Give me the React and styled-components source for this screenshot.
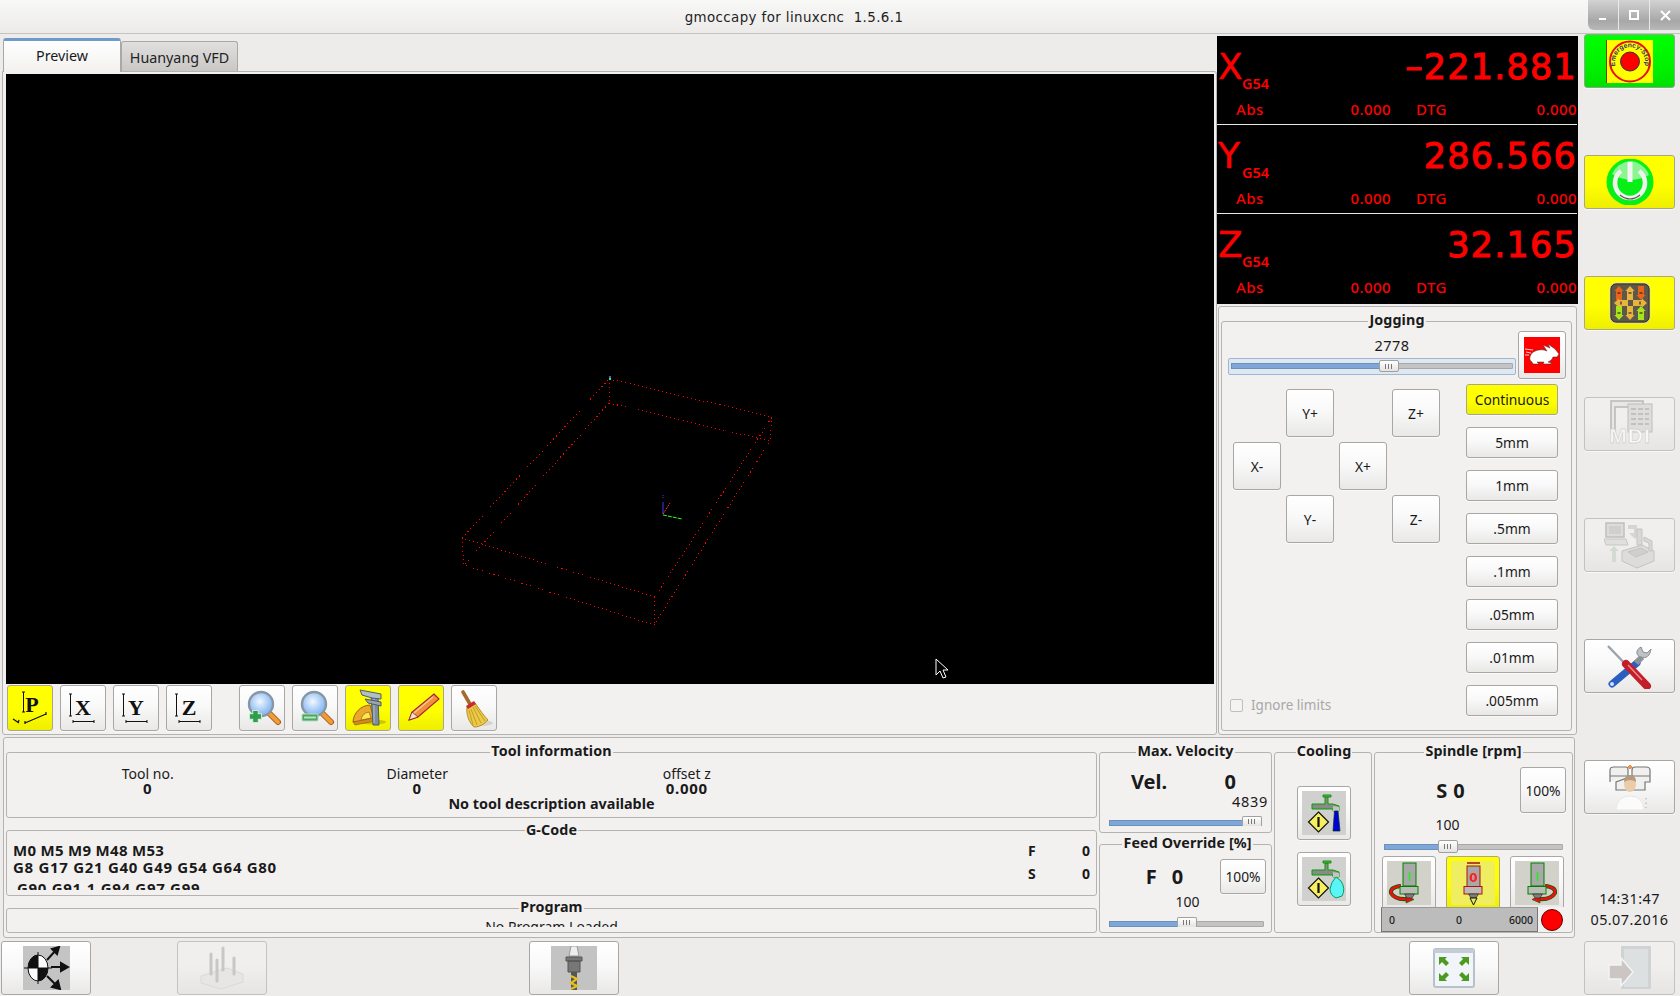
import React from "react";
import styled, { createGlobalStyle, css } from "styled-components";

const Global = createGlobalStyle`
  html, body { margin: 0; padding: 0; background: #edeceb; }
  body { font-family: "Noto Sans", "DejaVu Sans", sans-serif; font-size: 14px; color: #1a1a1a; overflow: hidden; }
  * { box-sizing: border-box; }
`;

const Page = styled.div`
  width: 1680px;
  height: 996px;
  display: flex;
  flex-direction: column;
  overflow: hidden;
`;

const TitleBar = styled.div`
  height: 34px;
  display: flex;
  background: linear-gradient(#f8f8f7, #ecebea);
  border-bottom: 1px solid #c4c3c1;
`;
const Title = styled.div`
  flex: 1;
  text-align: center;
  line-height: 35px;
  font-family: "DejaVu Sans", sans-serif;
  font-size: 13.4px;
  font-weight: 500;
  letter-spacing: 0.4px;
  color: #222;
`;
const WinControls = styled.div`
  width: 92px;
  height: 30px;
  display: flex;
  border-radius: 0 0 0 6px;
  overflow: hidden;
  gap: 1px;
  background: #e9e9e9;
`;
const WinButton = styled.div`
  flex: 1;
  display: flex;
  align-items: center;
  justify-content: center;
  background: linear-gradient(#d3d3d3, #a7a7a7 70%, #b8b8b8);
`;

const Body = styled.div`
  flex: 1;
  display: flex;
`;
const LeftArea = styled.div`
  width: 1584px;
  display: flex;
  flex-direction: column;
`;
const TopArea = styled.div`
  height: 703px;
  display: flex;
`;

/* notebook with the preview */
const Notebook = styled.div`
  width: 1215px;
  margin-left: 2px;
  height: 701px;
  display: flex;
  flex-direction: column;
`;
const TabRow = styled.div`
  height: 37px;
  display: flex;
  align-items: flex-end;
  padding-left: 1px;
`;
const Tab = styled.div`
  height: ${(p) => (p.$active ? 34 : 30)}px;
  width: ${(p) => (p.$active ? 118 : 117)}px;
  display: flex;
  align-items: center;
  justify-content: center;
  font-size: 14.3px;
  border: 1px solid #aaa8a5;
  border-bottom: none;
  border-radius: 3px 3px 0 0;
  ${(p) =>
    p.$active
      ? css`
          border-top: 3px solid #6f9bcb;
          background: linear-gradient(#fff, #f2f1f0);
          position: relative;
          top: 1px;
          padding-bottom: 2px;
        `
      : css`
          background: linear-gradient(#e0dfde, #c9c8c6);
          color: #222;
          padding-top: 2px;
        `}
`;
const NotebookPage = styled.div`
  flex: 1;
  border: 1px solid #b5b3b0;
  background: #f2f1f0;
  padding: 2px 0 0 3px;
  border-radius: 0 3px 3px 3px;
  display: flex;
  flex-direction: column;
`;
const Canvas = styled.div`
  width: 1208px;
  height: 610px;
  background: #000;
`;
const Toolbar = styled.div`
  display: flex;
  gap: 7px;
  margin-top: 1px;
  padding-left: 1px;
`;
const ToolSpacer = styled.div`
  width: 13px;
`;

const toneStyles = {
  plain: css`
    background: linear-gradient(#fff, #f9f9f9 45%, #e9e8e7);
    border-color: #a9a7a4;
  `,
  off: css`
    background: linear-gradient(#f0efee, #f0efee 45%, #e6e5e4);
    border-color: #c4c2c0;
  `,
  yellow: css`
    background: linear-gradient(#ffff00, #ffff00 55%, #eeee00);
    border-color: #a9a78a;
  `,
  green: css`
    background: linear-gradient(#00ff00, #00f200 60%, #00e000);
    border-color: #8aa98a;
  `,
};

const Btn = styled.div`
  width: ${(p) => p.$w || 46}px;
  height: ${(p) => p.$h || 46}px;
  flex: none;
  display: flex;
  align-items: center;
  justify-content: center;
  border: 1px solid;
  border-radius: 3px;
  box-shadow: 0 1px 0 rgba(255, 255, 255, 0.6);
  font-size: 13.8px;
  color: #1a1a1a;
  ${(p) => toneStyles[p.$tone || "plain"]}
`;

/* position read out */
const SideColumn = styled.div`
  width: 361px;
  display: flex;
  flex-direction: column;
`;
const Dro = styled.div`
  margin-top: 2px;
  height: 268px;
  background: #000;
  color: #ff0000;
  display: flex;
  flex-direction: column;
  padding-right: 1px;
`;
const AxisRow = styled.div`
  height: ${(p) => (p.$last ? 90 : 89)}px;
  display: flex;
  flex-direction: column;
  border-bottom: ${(p) => (p.$last ? "none" : "1px solid #e8e8e8")};
  padding-top: 11px;
`;
const AxisTop = styled.div`
  height: 46px;
  display: flex;
  align-items: flex-start;
`;
const AxisLetter = styled.div`
  font-family: "DejaVu Sans", sans-serif;
  font-size: 36px;
  line-height: 40px;
  -webkit-text-stroke: 0.4px #ff0000;
  width: 25px;
  padding-left: 1px;
`;
const AxisSystem = styled.div`
  margin-top: 26px;
  font-size: 14.5px;
  font-weight: 600;
  line-height: 20px;
`;
const AxisValue = styled.div`
  margin-left: auto;
  font-family: "DejaVu Sans", sans-serif;
  font-size: 35px;
  line-height: 40px;
  letter-spacing: 1.2px;
  -webkit-text-stroke: 1px #ff0000;
`;
const AxisBottom = styled.div`
  display: grid;
  grid-template-columns: 19px 60px 95px 25px 1fr;
  font-size: 15px;
  font-weight: 500;
  line-height: 18px;
  letter-spacing: 0.4px;
  margin-top: 7px;
`;
const Right = styled.div`
  text-align: right;
`;
const DtgCell = styled.div`
  display: flex;
  justify-content: space-between;
`;

/* fieldset style frames */
const Outer = styled.div`
  border: 1px solid #b5b3b0;
  border-radius: 3px;
  background: #f2f1f0;
`;
const Frame = styled.fieldset`
  margin: 0;
  padding: 0;
  min-width: 0;
  border: 1px solid #b5b3b0;
  border-radius: 3px;
`;
const Legend = styled.legend`
  margin: 0 auto;
  padding: 0 1px 2px;
  font-weight: 700;
  font-size: 14.3px;
  line-height: 14px;
  letter-spacing: 0.1px;
  color: #1a1a1a;
`;

const JogPanel = styled(Outer)`
  margin: 2px 0 0 1px;
  width: 359px;
  height: 429px;
  padding: 6px 4px 3px 2px;
`;
const JogFrame = styled(Frame)`
  height: 100%;
  padding: 0 5px 0 6px;
`;
const JogHead = styled.div`
  display: flex;
  align-items: flex-start;
  height: 55px;
`;
const JogRate = styled.div`
  width: 290px;
  flex: none;
  padding-top: 7px;
`;
const RateValue = styled.div`
  text-align: center;
  line-height: 18px;
  font-size: 14.5px;
  letter-spacing: 0.5px;
  padding-left: 38px;
`;
const RateBox = styled.div`
  margin-top: 4px;
  width: 288px;
  height: 17px;
  padding: 4px 2px;
  background: #dfe7f0;
  border: 1px solid #9db6d3;
  border-radius: 2px;
`;
const RabbitSlot = styled.div`
  margin-top: 2px;
`;
const JogBody = styled.div`
  display: flex;
  justify-content: space-between;
  height: 340px;
`;
const JogLeft = styled.div`
  width: 220px;
  display: flex;
  flex-direction: column;
  justify-content: space-between;
  padding: 5px 0 10px 5px;
`;
const JogGrid = styled.div`
  display: grid;
  grid-template-columns: repeat(4, 48px);
  grid-auto-rows: 48px;
  gap: 5px;
`;
const Cell = styled.div`
  grid-column: ${(p) => p.$c};
  grid-row: ${(p) => p.$r};
`;
const Increments = styled.div`
  width: 92px;
  margin-right: 8px;
  display: flex;
  flex-direction: column;
  gap: 12px;
`;
const IgnoreRow = styled.div`
  display: flex;
  align-items: center;
  gap: 8px;
  color: #a9a8a6;
  margin-left: -3px;
  font-size: 13.5px;
`;
const CheckBox = styled.div`
  width: 13px;
  height: 13px;
  border: 1px solid #c0bfbd;
  border-radius: 2px;
  background: #f4f3f2;
`;

/* sliders */
const Track = styled.div`
  position: relative;
  height: 6px;
  background: #c3c3c3;
  border: 1px solid #a8a8a8;
  border-radius: 1px;
`;
const TrackFill = styled.div`
  height: 100%;
  background: #7ea6d6;
  border: 1px solid #6a90bd;
  margin: -1px 0 0 -1px;
  box-sizing: content-box;
`;
const Thumb = styled.div`
  position: absolute;
  top: ${(p) => p.$top}px;
  width: ${(p) => p.$w}px;
  height: ${(p) => p.$th}px;
  transform: translateX(-50%);
  background: linear-gradient(#fff, #e4e3e1);
  border: 1px solid #a0a09e;
  border-radius: 2px;
  ${(p) =>
    p.$cut &&
    css`
      border-bottom: none;
      border-radius: 2px 2px 0 0;
    `}
  display: flex;
  align-items: center;
  justify-content: center;
  gap: 2px;
`;
const Grip = styled.span`
  width: 1px;
  height: 5px;
  background: #777;
`;

const Slider = ({ pos, w = 20, top = -4, th = 12, cut }) => (
  <Track>
    <TrackFill style={{ width: `${pos}%` }} />
    <Thumb $w={w} $top={top} $th={th} $cut={cut} style={{ left: `${pos}%` }}>
      <Grip />
      <Grip />
      <Grip />
    </Thumb>
  </Track>
);

/* bottom info panel */
const InfoPanel = styled(Outer)`
  margin: 0 0 0 3px;
  width: 1572px;
  height: 201px;
  padding: 6px 2px 0 2px;
  display: grid;
  grid-template-columns: 1091px 173px 98px 199px;
  column-gap: 2px;
`;
const InfoLeft = styled.div`
  display: grid;
  grid-template-rows: 74px 73px 33px;
  row-gap: 4.5px;
  height: 189px;
`;
const ToolGrid = styled.div`
  display: grid;
  grid-template-columns: repeat(3, 269.5px);
  padding: 6px 0 0 6px;
  text-align: center;
  line-height: 15px;
`;
const ToolValue = styled.div`
  font-weight: 700;
  font-size: 15px;
  line-height: 15px;
  letter-spacing: 0.7px;
`;
const ToolDesc = styled.div`
  text-align: center;
  font-weight: 700;
  font-size: 14.4px;
  line-height: 15px;
`;
const GcodeBody = styled.div`
  height: 51px;
  overflow: hidden;
  display: flex;
  justify-content: space-between;
  padding: 3px 6px 0 6px;
  font-weight: 700;
  font-size: 15px;
  line-height: 17px;
`;
const GcodeLine = styled.div`
  letter-spacing: ${(p) => p.$ls}px;
`;
const GcodeThird = styled(GcodeLine)`
  margin-top: 4px;
  padding-left: 4px;
`;
const Feeds = styled.div`
  width: 62px;
  display: flex;
  flex-direction: column;
  gap: 6px;
  font-size: 14px;
`;
const FeedRow = styled.div`
  display: flex;
  justify-content: space-between;
`;
const ProgramBody = styled.div`
  height: 11px;
  overflow: hidden;
  padding-top: 3px;
  text-align: center;
  line-height: 15px;
  font-size: 14px;
`;

const StackCol = styled.div`
  display: flex;
  flex-direction: column;
  gap: 3px;
  height: 189px;
`;
const VelFrame = styled(Frame)`
  height: 89px;
  padding: 0 9px;
`;
const VelRow = styled.div`
  display: flex;
  justify-content: space-between;
  padding: 8px 26px 0 22px;
  font-size: 20px;
  font-weight: 700;
  line-height: 28px;
`;
const VelMax = styled.div`
  text-align: right;
  line-height: 16px;
  font-size: 14.5px;
  letter-spacing: 0.7px;
  margin: -3px -6px 0 0;
`;
const SliderSlot = styled.div`
  margin-top: ${(p) => p.$top}px;
`;
const FeedFrame = styled(Frame)`
  height: 97px;
  padding: 0 5px 0 9px;
`;
const FeedTop = styled.div`
  display: flex;
  align-items: center;
  margin-top: 7px;
`;
const FeedSlider = styled(SliderSlot)`
  margin-right: 2px;
`;
const BigValue = styled.div`
  flex: 1;
  display: flex;
  justify-content: center;
  gap: ${(p) => p.$gap || 12}px;
  font-size: 20px;
  font-weight: 700;
`;
const Percent = styled.div`
  text-align: center;
  line-height: 16px;
  font-size: 14px;
`;
const CoolFrame = styled(Frame)`
  height: 189px;
  display: flex;
  flex-direction: column;
  align-items: center;
  gap: 12px;
  padding: 26px 0 0 2px;
`;
const SpindleFrame = styled(Frame)`
  height: 189px;
  padding: 0 6px 0 6px;
`;
const SpindlePercent = styled(Percent)`
  padding-right: 52px;
  margin-top: 4px;
`;
const SpindleSlider = styled(SliderSlot)`
  padding: 0 3px;
`;
const SpindleButtons = styled.div`
  display: flex;
  justify-content: space-between;
  height: 51px;
  overflow: hidden;
  margin: 6px 2px 0 1px;
`;
const SpindleBottom = styled.div`
  display: flex;
  gap: 3px;
  align-items: center;
`;
const SpeedBar = styled.div`
  width: 157px;
  height: 25px;
  background: #bcbcbc;
  border: 1px solid #777;
  border-top: 1px solid #999;
  padding: 0 4px 0 7px;
  display: flex;
  justify-content: space-between;
  align-items: center;
  font-size: 10.5px;
  font-weight: 500;
`;
const BarMid = styled.span`
  padding-left: 14px;
`;
const Led = styled.div`
  width: 22px;
  height: 22px;
  border-radius: 50%;
  background: #ff0000;
  border: 1px solid #660000;
`;

const BottomBar = styled.div`
  margin-top: 3px;
  height: 54px;
  display: flex;
  padding-left: 1px;
`;
const BarGap = styled.div`
  width: ${(p) => p.$w}px;
`;

/* right rail */
const Rail = styled.div`
  width: 96px;
  padding: 0 5px 0 0;
  display: flex;
  flex-direction: column;
  align-items: flex-end;
  gap: 67px;
`;
const Clock = styled.div`
  width: 91px;
  margin-top: 7px;
  text-align: center;
  font-size: 14.4px;
  line-height: 21px;
  letter-spacing: 0.45px;
`;
const RailBottom = styled.div`
  margin-top: -56px;
`;

/* ------- drawings ------- */
const Preview = () => {
  const dots = { stroke: "#ff0000", strokeWidth: 1, strokeDasharray: "1 3.2", fill: "none", shapeRendering: "crispEdges" };
  return (
    <svg width="1208" height="610" viewBox="0 0 1208 610">
      <g {...dots}>
        <path d="M603 305 L766 343 L649 523 L456 464 Z" />
        <path d="M603 329 L764 367 L648 551 L458 491 Z" />
        <path d="M603 305 L603 329 M766 343 L764 367 M649 523 L648 551 M456 464 L458 491" />
      </g>
      <path d="M657 440 V428" stroke="#3a3aff" />
      <path d="M657 424 V421" stroke="#3a3aff" strokeDasharray="1 1" />
      <path d="M657 440 L664 429" stroke="#ff3030" strokeDasharray="2 1" />
      <path d="M657 441 L676 445" stroke="#30ff30" strokeDasharray="4 1" />
      <rect x="603" y="302" width="2" height="2" fill="#666" />
      <rect x="603" y="304" width="2" height="2" fill="#20e0e0" />
      <path d="M930 585 V601 L934 597 L937 604 L940 603 L937 596 L942 596 Z" fill="#000" stroke="#fff" />
    </svg>
  );
};

const Axes = ({ t }) => (
  <svg width="36" height="34" viewBox="0 0 36 34">
    <path d="M4 3 H7 M5.5 3 V25 M4 25 H7" stroke="#111" fill="none" />
    <path d="M8 32 V29 M8 30.5 H29 M29 29 V32" stroke="#111" fill="none" />
    <text x="18" y="24" textAnchor="middle" fontFamily="Liberation Serif, serif" fontWeight="700" fontSize="22" fill="#111">
      {t}
    </text>
  </svg>
);
const PersIcon = () => (
  <svg width="38" height="36" viewBox="0 0 38 36">
    <path d="M11 2 H14 M12.5 2 V22 M11 22 H14" stroke="#111" fill="none" />
    <text x="21" y="22" textAnchor="middle" fontFamily="Liberation Serif, serif" fontWeight="700" fontSize="22" fill="#111">P</text>
    <path d="M2 29 L8 33 M8 30 L7 33 M14 33 L35 24 M14 31 L14 34 M35 22 L35 25" stroke="#111" fill="none" strokeWidth="1.2" />
  </svg>
);
const Zoom = ({ plus }) => {
  const id = plus ? "lensPlus" : "lensMinus";
  return (
    <svg width="44" height="44" viewBox="0 0 44 44">
      <defs>
        <radialGradient id={id} cx="0.45" cy="0.4">
          <stop offset="0" stopColor="#f2f8ff" />
          <stop offset="1" stopColor="#8dbcf2" />
        </radialGradient>
      </defs>
      <path d="M28 26 L38 36" stroke="#a85e14" strokeWidth="6" strokeLinecap="round" />
      <path d="M28 26 L38 36" stroke="#f09a3a" strokeWidth="4" strokeLinecap="round" />
      <circle cx="21" cy="18" r="12" fill={`url(#${id})`} stroke="#8696a4" strokeWidth="2.4" />
      {plus ? (
        <>
          <path d="M15.5 24 V37 M9 30.5 H22" stroke="#cfe8d4" strokeWidth="6.5" />
          <path d="M15.5 25 V36 M10 30.5 H21" stroke="#2e9e4e" strokeWidth="4.5" />
        </>
      ) : (
        <>
          <rect x="9" y="28" width="16" height="7" rx="1" fill="#4da564" stroke="#b8dcc0" />
          <rect x="11" y="30.5" width="12" height="2" fill="#b4e4c0" />
        </>
      )}
    </svg>
  );
};
const Measure = () => (
  <svg width="44" height="44" viewBox="0 0 44 44">
    <ellipse cx="26" cy="36" rx="14" ry="2.5" fill="#c8c800" />
    <path d="M7 36 A18 18 0 0 1 24 19 L28 33 Z" fill="#eaa92c" stroke="#9a6210" />
    <path d="M15 34 A9 9 0 0 1 23 26 L25 32 Z" fill="#ffe850" stroke="#9a6210" strokeWidth="0.7" />
    <path d="M7 36 L28 32 L29 35 L9 39 Z" fill="#d48a20" stroke="#9a6210" strokeWidth="0.7" />
    <path d="M25 9 H32 L33 39 H27 Z" fill="#7e8e9a" stroke="#4c5c68" />
    <path d="M28 9 V37" stroke="#b2bec6" />
    <path d="M14 4 L35 8 V13 L26 12 L16 9 Z" fill="#b2bec6" stroke="#4c5c68" />
    <path d="M19 13 L35 16 V20 L22 17 Z" fill="#98a6b0" stroke="#4c5c68" />
  </svg>
);
const Pencil = () => (
  <svg width="44" height="44" viewBox="0 0 44 44">
    <path d="M35 8 L40 13 L19 31 L10 34 L13 26 Z" fill="#f0903c" stroke="#a81c42" strokeWidth="1.1" />
    <path d="M13 26 L19 31 L10 34 Z" fill="#f6dfc8" stroke="#7a1030" strokeWidth="0.7" />
    <path d="M34 11 L15 27" stroke="#f9cd90" strokeWidth="1.2" />
  </svg>
);
const Broom = () => (
  <svg width="44" height="44" viewBox="0 0 44 44">
    <ellipse cx="30" cy="37" rx="11" ry="3" fill="#d4d4d2" />
    <path d="M11 6 L18 18" stroke="#a56a2c" strokeWidth="3.6" strokeLinecap="round" />
    <path d="M15 21 L23 17 C28 24 32 30 36 34 C32 38 28 41 22 41 C17 36 14 29 15 21 Z" fill="#edc948" stroke="#b58f24" />
    <path d="M14 20 L22 15 L24 18 L16 23 Z" fill="#c82c2c" />
    <path d="M17 24 L21 39 M19 23 L25 39 M21 21 L29 37 M23 20 L33 35" stroke="#b58f24" strokeWidth="0.8" />
  </svg>
);
const EStop = () => (
  <svg width="47" height="43" viewBox="0 0 47 43">
    <rect width="47" height="43" fill="#ffff00" />
    <rect width="1" height="43" fill="#7a3a00" />
    <circle cx="24" cy="21.5" r="20" fill="none" stroke="#e81010" strokeWidth="2" />
    <circle cx="24" cy="21.5" r="9.5" fill="#ff0000" stroke="#333" />
    <defs>
      <path id="estopArc" d="M9.5 26 A15 15 0 1 1 38.5 26" />
    </defs>
    <text fontFamily="Liberation Sans, sans-serif" fontSize="6.8" fontWeight="700" fill="#30306a">
      <textPath href="#estopArc">Emergency-Stop</textPath>
    </text>
  </svg>
);
const Power = () => (
  <svg width="48" height="46" viewBox="0 0 48 46">
    <circle cx="24" cy="23" r="23.5" fill="#08ef18" />
    <path d="M24 2 A22 20 0 0 1 43 16 Q24 26 6 15 A22 20 0 0 1 24 2 Z" fill="#8bf58f" />
    <path d="M15 12 A15 15 0 1 0 33 12" fill="none" stroke="#eef2ee" strokeWidth="4.6" />
    <path d="M24 3 V23" stroke="#f4f4f4" strokeWidth="5" />
    <path d="M14 36 Q24 44 34 36" stroke="#555" strokeWidth="1.2" fill="none" />
  </svg>
);
const Arrow = ({ x, y, r, c }) => (
  <g transform={`translate(${x} ${y}) rotate(${r})`}>
    <path d="M0 -7 L4.6 -2 H3 V7 H-3 V-2 H-4.6 Z" fill={c} />
    <rect x="-1.5" y="-1" width="3" height="2" fill="#33281a" opacity="0.6" />
  </g>
);
const JogIcon = () => (
  <svg width="42" height="42" viewBox="0 0 42 42">
    <rect x="1" y="1" width="40" height="40" rx="6" fill="#5d5848" stroke="#e6dfc0" />
    <rect x="2" y="2" width="38" height="38" rx="5" fill="none" stroke="#3a3528" />
    <Arrow x={10} y={11} r={0} c="#e8641c" />
    <Arrow x={21} y={11} r={0} c="#e8b440" />
    <Arrow x={32} y={11} r={180} c="#e8641c" />
    <Arrow x={12} y={21} r={-90} c="#e8b440" />
    <Arrow x={31} y={21} r={90} c="#e8b440" />
    <Arrow x={10} y={31} r={180} c="#a8e41c" />
    <Arrow x={21} y={31} r={180} c="#e8b440" />
    <Arrow x={32} y={31} r={0} c="#a8e41c" />
  </svg>
);
const MdiIcon = () => (
  <svg width="48" height="50" viewBox="0 0 48 50">
    <path d="M5 2 H37 V8 H9 V34 H5 Z" fill="#e8e7e6" stroke="#b9b8b7" strokeWidth="1.5" />
    <rect x="22" y="5" width="24" height="28" fill="#dedddc" stroke="#bdbcbb" />
    <path d="M25 10 H43 M25 15 H43 M25 20 H43 M25 25 H43" stroke="#c2c1c0" strokeWidth="2" strokeDasharray="5 2" />
    <text x="24" y="44" textAnchor="middle" fontFamily="Liberation Sans, sans-serif" fontWeight="700" fontSize="21" letterSpacing="1" fill="#fbfbfb" stroke="#d5d4d3" strokeWidth="0.8">MDI</text>
  </svg>
);
const AutoIcon = () => (
  <svg width="52" height="48" viewBox="0 0 52 48">
    <path d="M2 2 H20 V16 H2 Z" fill="#dcdcdb" stroke="#c0bfbe" strokeWidth="1.5" />
    <path d="M5 5 H17 V13 H5 Z" fill="#cfcfce" />
    <path d="M0 18 H22 L24 24 H2 Z" fill="#e0dfde" stroke="#c6c5c4" />
    <path d="M24 4 H33 V12 H37 L31 18 L25 12 H30 V8 H24 Z" fill="#d6d5d4" />
    <path d="M5 30 L10 25 L15 30 H12 V41 H8 V30 Z" fill="#d2dbd2" />
    <path d="M18 30 L38 24 L50 30 V40 L33 47 L18 40 Z" fill="#dddcdb" stroke="#c4c3c2" />
    <path d="M24 31 L37 27 L44 31 L32 36 Z" fill="#d0cfce" stroke="#c4c3c2" />
    <path d="M33 8 H38 V24 H33 Z M40 16 L48 20 V30 H45 V22 L40 20 Z" fill="#d9d8d7" stroke="#c4c3c2" />
  </svg>
);
const ToolsIcon = () => (
  <svg width="48" height="46" viewBox="0 0 48 46">
    <path d="M2 3 L25 27" stroke="#9aa2aa" strokeWidth="2.4" />
    <path d="M31 20 L6 41" stroke="#2a5fc0" strokeWidth="7" strokeLinecap="round" />
    <circle cx="6" cy="41" r="2" fill="#cfe0ff" />
    <path d="M36 14 L30 20" stroke="#8d9499" strokeWidth="6" />
    <path d="M35 4 C29 7 30 13 35 14 C40 16 44 13 45 6 L41 10 L37 9 Z" fill="#bcc2c6" stroke="#858c90" />
    <path d="M20 21 L41 43" stroke="#c21f2a" strokeWidth="8" strokeLinecap="round" />
    <path d="M22 22 L36 37" stroke="#ee8a8a" strokeWidth="1.5" />
  </svg>
);
const UserIcon = () => (
  <svg width="44" height="46" viewBox="0 0 44 46">
    <path d="M2 18 V6 Q2 3 6 3 H18 Q20 3 20 6 V12 M24 12 V6 Q24 3 27 3 H38 Q42 3 42 6 V18 H37 V26 H8 V18 Z" fill="#f0f0ef" stroke="#777" strokeWidth="1.2" />
    <path d="M2 12 H42" stroke="#777" />
    <circle cx="22" cy="3" r="1.5" fill="#e8c020" stroke="#d03030" strokeWidth="0.6" />
    <ellipse cx="22" cy="20" rx="6" ry="8" fill="#eccbaa" />
    <path d="M16 18 Q16 11 22 11 Q28 11 28 18 Q22 14 16 18" fill="#b59a80" />
    <path d="M8 46 Q9 32 22 32 Q35 32 36 46 Z" fill="#fbfbfb" stroke="#e8e8e8" />
    <path d="M38 34 V44" stroke="#aaa" strokeDasharray="1.5 3" />
  </svg>
);
const Rabbit = () => (
  <svg width="36" height="36" viewBox="0 0 36 36">
    <rect width="36" height="36" fill="#ff0000" />
    <path d="M6 20 C7 15 13 12 20 13 L23 14 L19 8 L26 11 L24 7 L31 12 L35 17 L33 20 L29 20 C28 23 26 24 24 25 L28 26 L26 27 H19 L20 25 L13 25 L15 27 H9 L8 25 C6 24 5.5 22 6 20 Z" fill="#fff" stroke="#333" strokeWidth="0.5" />
    <path d="M1 12 L9 13 M2 15 L7 16 M1 18 L5 18" stroke="#fff" strokeWidth="0.8" />
  </svg>
);
const Tap = ({ flood }) => (
  <svg width="44" height="44" viewBox="0 0 44 44">
    <rect width="44" height="44" fill="#d0d0ce" />
    <g fill="#8a8a88" stroke="#00a000" strokeWidth="1">
      <path d="M10 13 H23 V6 H26 V13 H31 L37 15 V20 H31 V18 H10 Z" />
      <path d="M21 4 H29 V6 H21 Z" />
    </g>
    <path d="M31 15 L37 16 V20 H31 Z" fill="#c4c4c2" />
    <path d="M16.5 21 L26.5 31 L16.5 41 L6.5 31 Z" fill="#f7ef60" stroke="#111" strokeWidth="1.2" />
    <path d="M16.5 26 V36" stroke="#111" strokeWidth="2.2" />
    {flood ? (
      <path d="M34 20 L39 24 Q44 32 40 39 L34 41 Q28 38 28 32 Q29 25 34 20 Z" fill="#5af5f7" stroke="#00a060" strokeWidth="1" />
    ) : (
      <path d="M32.5 20 H36 L38 40 H31 Z" fill="#0000d8" stroke="#003020" strokeWidth="0.7" />
    )}
  </svg>
);
const SpindleIcon = ({ dir }) => {
  const stopped = dir === 0;
  const line = stopped ? "#b01010" : "#008000";
  return (
    <svg width="44" height="44" viewBox="0 0 44 44">
      <rect width="44" height="44" fill={stopped ? "#eeee60" : "#d2d2cb"} />
      <g transform={dir > 0 ? "translate(44 0) scale(-1 1)" : undefined}>
        {!stopped && (
          <>
            <path d="M14 25 Q3 26 4 32 Q8 39 20 38" fill="none" stroke="#006000" strokeWidth="4" />
            <path d="M14 25 Q3 26 4 32 Q8 39 20 38" fill="none" stroke="#ee1010" strokeWidth="2.6" />
            <path d="M19 34 L27 38.5 L19 42 Z" fill="#ee1010" stroke="#006000" strokeWidth="0.6" />
          </>
        )}
      </g>
      <rect x="16" y={stopped ? 5 : 2} width="13" height={stopped ? 21 : 23} fill="#a8a8a6" stroke={line} />
      {stopped ? (
        <text x="22.5" y="21" textAnchor="middle" fontFamily="DejaVu Sans, sans-serif" fontWeight="700" fontSize="12" fill="#ff2020">0</text>
      ) : (
        <path d="M22.5 11 V20" stroke="#20f020" strokeWidth="1.6" />
      )}
      {stopped && <path d="M16 2 H29" stroke="#a02020" strokeWidth="1.6" />}
      <rect x="13" y="25.5" width="18" height="7.5" fill="#bcbcb6" stroke={line} />
      <path d="M17.5 33 H27.5 L25 37 H20 Z" fill="#7e7e7a" stroke="#222" strokeWidth="0.6" />
      {stopped && <path d="M19 37 H26 L22.5 44 Z" fill="#e8e860" stroke="#111" />}
    </svg>
  );
};
const RefIcon = () => (
  <svg width="47" height="44" viewBox="0 0 47 44">
    <rect width="47" height="44" fill="#c4c4c4" />
    <ellipse cx="15" cy="22" rx="10" ry="13" fill="#fff" stroke="#111" />
    <path d="M15 9 A10 13 0 0 0 5 22 H15 Z M15 22 H25 A10 13 0 0 1 15 35 Z" fill="#111" />
    <path d="M1 22 H29 M15 6 V38" stroke="#111" />
    <path d="M24 14 L33 4 M36 1 L29 3 L34 8 Z M28 21 H40 M45 21 L38 17 V25 Z M24 30 L33 39 M37 43 L35 35 L29 41 Z" stroke="#111" strokeWidth="2" fill="#111" />
  </svg>
);
const ProbeIcon = () => (
  <svg width="50" height="44" viewBox="0 0 50 44">
    <path d="M4 30 L30 22 L46 28 V36 L24 43 L4 37 Z" fill="#e7e6e5" stroke="#dad9d8" />
    <path d="M14 8 V28 M26 2 V24 M37 12 V28 M20 14 V35" stroke="#c8c7c6" strokeWidth="3" strokeLinecap="round" />
  </svg>
);
const ToolChange = () => (
  <svg width="46" height="44" viewBox="0 0 46 44">
    <rect width="46" height="44" fill="#c3c3c3" />
    <path d="M20 0 H26 L28 10 H18 Z" fill="#eee" stroke="#999" />
    <path d="M15 11 H31 V15 H15 Z M17 15 H29 V26 H17 Z" fill="#777" stroke="#555" />
    <path d="M20 26 H26 V44 H20 Z" fill="#555" />
    <path d="M20 30 L26 33 L20 37 L26 40 L20 43" stroke="#e6c020" strokeWidth="2.2" fill="none" />
  </svg>
);
const FullScreen = () => (
  <svg width="42" height="40" viewBox="0 0 42 40">
    <rect x="1" y="1" width="40" height="38" rx="2" fill="#f1f4f8" stroke="#b8c0cc" strokeWidth="2" />
    <rect x="1" y="1" width="40" height="4" fill="#c4ccd6" />
    <g fill="#4c9a20">
      <path d="M6 9 H14 L12 11 L16 15 L13 18 L9 14 L6 17 Z" />
      <path d="M36 9 H28 L30 11 L26 15 L29 18 L33 14 L36 17 Z" />
      <path d="M6 33 H14 L12 31 L16 27 L13 24 L9 28 L6 25 Z" />
      <path d="M36 33 H28 L30 31 L26 27 L29 24 L33 28 L36 25 Z" />
    </g>
  </svg>
);
const ExitIcon = () => (
  <svg width="46" height="46" viewBox="0 0 46 46">
    <path d="M14 1 H44 V44 H14 Z" fill="#cfd3d3" />
    <path d="M17 4 H41 V42 H17 Z" fill="#dce0e0" />
    <path d="M2 20 H14 V13 L26 27 L14 41 V34 H2 Z" fill="#cbc5c3" stroke="#f4f4f4" strokeWidth="1.5" />
  </svg>
);

const axes = [
  { name: "X", value: "–221.881" },
  { name: "Y", value: "286.566" },
  { name: "Z", value: "32.165" },
];
const increments = ["5mm", "1mm", ".5mm", ".1mm", ".05mm", ".01mm", ".005mm"];
const jogKeys = [
  { t: "Y+", c: 2, r: 1 },
  { t: "Z+", c: 4, r: 1 },
  { t: "X-", c: 1, r: 2 },
  { t: "X+", c: 3, r: 2 },
  { t: "Y-", c: 2, r: 3 },
  { t: "Z-", c: 4, r: 3 },
];

const App = () => (
  <Page>
    <Global />
    <TitleBar>
      <Title>gmoccapy for linuxcnc&nbsp;&nbsp;1.5.6.1</Title>
      <WinControls>
        <WinButton>
          <svg width="10" height="10"><path d="M1 9 H8" stroke="#fff" strokeWidth="2" /></svg>
        </WinButton>
        <WinButton>
          <svg width="10" height="10"><rect x="1" y="1" width="8" height="8" fill="none" stroke="#fff" strokeWidth="2" /></svg>
        </WinButton>
        <WinButton>
          <svg width="11" height="11"><path d="M1 1 L10 10 M10 1 L1 10" stroke="#fff" strokeWidth="2" /></svg>
        </WinButton>
      </WinControls>
    </TitleBar>
    <Body>
      <LeftArea>
        <TopArea>
          <Notebook>
            <TabRow>
              <Tab $active>Preview</Tab>
              <Tab>Huanyang VFD</Tab>
            </TabRow>
            <NotebookPage>
              <Canvas>
                <Preview />
              </Canvas>
              <Toolbar>
                <Btn $tone="yellow"><PersIcon /></Btn>
                <Btn><Axes t="X" /></Btn>
                <Btn><Axes t="Y" /></Btn>
                <Btn><Axes t="Z" /></Btn>
                <ToolSpacer />
                <Btn><Zoom plus /></Btn>
                <Btn><Zoom /></Btn>
                <Btn $tone="yellow"><Measure /></Btn>
                <Btn $tone="yellow"><Pencil /></Btn>
                <Btn><Broom /></Btn>
              </Toolbar>
            </NotebookPage>
          </Notebook>
          <SideColumn>
            <Dro>
              {axes.map((a, i) => (
                <AxisRow key={a.name} $last={i === 2}>
                  <AxisTop>
                    <AxisLetter>{a.name}</AxisLetter>
                    <AxisSystem>G54</AxisSystem>
                    <AxisValue>{a.value}</AxisValue>
                  </AxisTop>
                  <AxisBottom>
                    <span />
                    <span>Abs</span>
                    <Right>0.000</Right>
                    <span />
                    <DtgCell>
                      <span>DTG</span>
                      <span>0.000</span>
                    </DtgCell>
                  </AxisBottom>
                </AxisRow>
              ))}
            </Dro>
            <JogPanel>
              <JogFrame>
                <Legend>Jogging</Legend>
                <JogHead>
                  <JogRate>
                    <RateValue>2778</RateValue>
                    <RateBox>
                      <Slider pos={56} />
                    </RateBox>
                  </JogRate>
                  <RabbitSlot>
                    <Btn $w={48} $h={48}><Rabbit /></Btn>
                  </RabbitSlot>
                </JogHead>
                <JogBody>
                  <JogLeft>
                    <JogGrid>
                      {jogKeys.map((k) => (
                        <Cell key={k.t} $c={k.c} $r={k.r}>
                          <Btn $w={48} $h={48}>{k.t}</Btn>
                        </Cell>
                      ))}
                    </JogGrid>
                    <IgnoreRow>
                      <CheckBox />
                      Ignore limits
                    </IgnoreRow>
                  </JogLeft>
                  <Increments>
                    <Btn $w={92} $h={31} $tone="yellow">Continuous</Btn>
                    {increments.map((t) => (
                      <Btn key={t} $w={92} $h={31}>{t}</Btn>
                    ))}
                  </Increments>
                </JogBody>
              </JogFrame>
            </JogPanel>
          </SideColumn>
        </TopArea>
        <InfoPanel>
          <InfoLeft>
            <Frame>
              <Legend>Tool information</Legend>
              <ToolGrid>
                <div>Tool no.<ToolValue>0</ToolValue></div>
                <div>Diameter<ToolValue>0</ToolValue></div>
                <div>offset z<ToolValue>0.000</ToolValue></div>
              </ToolGrid>
              <ToolDesc>No tool description available</ToolDesc>
            </Frame>
            <Frame>
              <Legend>G-Code</Legend>
              <GcodeBody>
                <div>
                  <GcodeLine $ls={0.3}>M0 M5 M9 M48 M53</GcodeLine>
                  <GcodeLine $ls={0.7}>G8 G17 G21 G40 G49 G54 G64 G80</GcodeLine>
                  <GcodeThird $ls={0.7}>G90 G91.1 G94 G97 G99</GcodeThird>
                </div>
                <Feeds>
                  <FeedRow><span>F</span><span>0</span></FeedRow>
                  <FeedRow><span>S</span><span>0</span></FeedRow>
                </Feeds>
              </GcodeBody>
            </Frame>
            <Frame>
              <Legend>Program</Legend>
              <ProgramBody>No Program Loaded</ProgramBody>
            </Frame>
          </InfoLeft>
          <StackCol>
            <VelFrame>
              <Legend>Max. Velocity</Legend>
              <VelRow><span>Vel.</span><span>0</span></VelRow>
              <VelMax>4839</VelMax>
              <SliderSlot $top={11}><Slider pos={94} w={20} top={-5} th={10} cut /></SliderSlot>
            </VelFrame>
            <FeedFrame>
              <Legend>Feed Override [%]</Legend>
              <FeedTop>
                <BigValue $gap={15}><span>F</span><span>0</span></BigValue>
                <Btn $w={46} $h={35}>100%</Btn>
              </FeedTop>
              <Percent>100</Percent>
              <FeedSlider $top={11}><Slider pos={50} w={20} top={-5} th={10} cut /></FeedSlider>
            </FeedFrame>
          </StackCol>
          <CoolFrame>
            <Legend>Cooling</Legend>
            <Btn $w={54} $h={54}><Tap /></Btn>
            <Btn $w={54} $h={54}><Tap flood /></Btn>
          </CoolFrame>
          <SpindleFrame>
            <Legend>Spindle [rpm]</Legend>
            <FeedTop>
              <BigValue $gap={6}><span>S</span><span>0</span></BigValue>
              <Btn $w={46} $h={46}>100%</Btn>
            </FeedTop>
            <SpindlePercent>100</SpindlePercent>
            <SpindleSlider $top={11}><Slider pos={35.5} w={20} top={-5} th={13} /></SpindleSlider>
            <SpindleButtons>
              <Btn $w={54} $h={54}><SpindleIcon dir={-1} /></Btn>
              <Btn $w={54} $h={54} $tone="yellow"><SpindleIcon dir={0} /></Btn>
              <Btn $w={54} $h={54}><SpindleIcon dir={1} /></Btn>
            </SpindleButtons>
            <SpindleBottom>
              <SpeedBar><span>0</span><BarMid>0</BarMid><span>6000</span></SpeedBar>
              <Led />
            </SpindleBottom>
          </SpindleFrame>
        </InfoPanel>
        <BottomBar>
          <Btn $w={90} $h={54}><RefIcon /></Btn>
          <BarGap $w={86} />
          <Btn $w={90} $h={54} $tone="off"><ProbeIcon /></Btn>
          <BarGap $w={262} />
          <Btn $w={90} $h={54}><ToolChange /></Btn>
          <BarGap $w={790} />
          <Btn $w={90} $h={54}><FullScreen /></Btn>
        </BottomBar>
      </LeftArea>
      <Rail>
        <Btn $w={91} $h={54} $tone="green"><EStop /></Btn>
        <Btn $w={91} $h={54} $tone="yellow"><Power /></Btn>
        <Btn $w={91} $h={54} $tone="yellow"><JogIcon /></Btn>
        <Btn $w={91} $h={54} $tone="off"><MdiIcon /></Btn>
        <Btn $w={91} $h={54} $tone="off"><AutoIcon /></Btn>
        <Btn $w={91} $h={54}><ToolsIcon /></Btn>
        <Btn $w={91} $h={54}><UserIcon /></Btn>
        <Clock>14:31:47<br />05.07.2016</Clock>
        <RailBottom><Btn $w={91} $h={54} $tone="off"><ExitIcon /></Btn></RailBottom>
      </Rail>
    </Body>
  </Page>
);

export default App;
